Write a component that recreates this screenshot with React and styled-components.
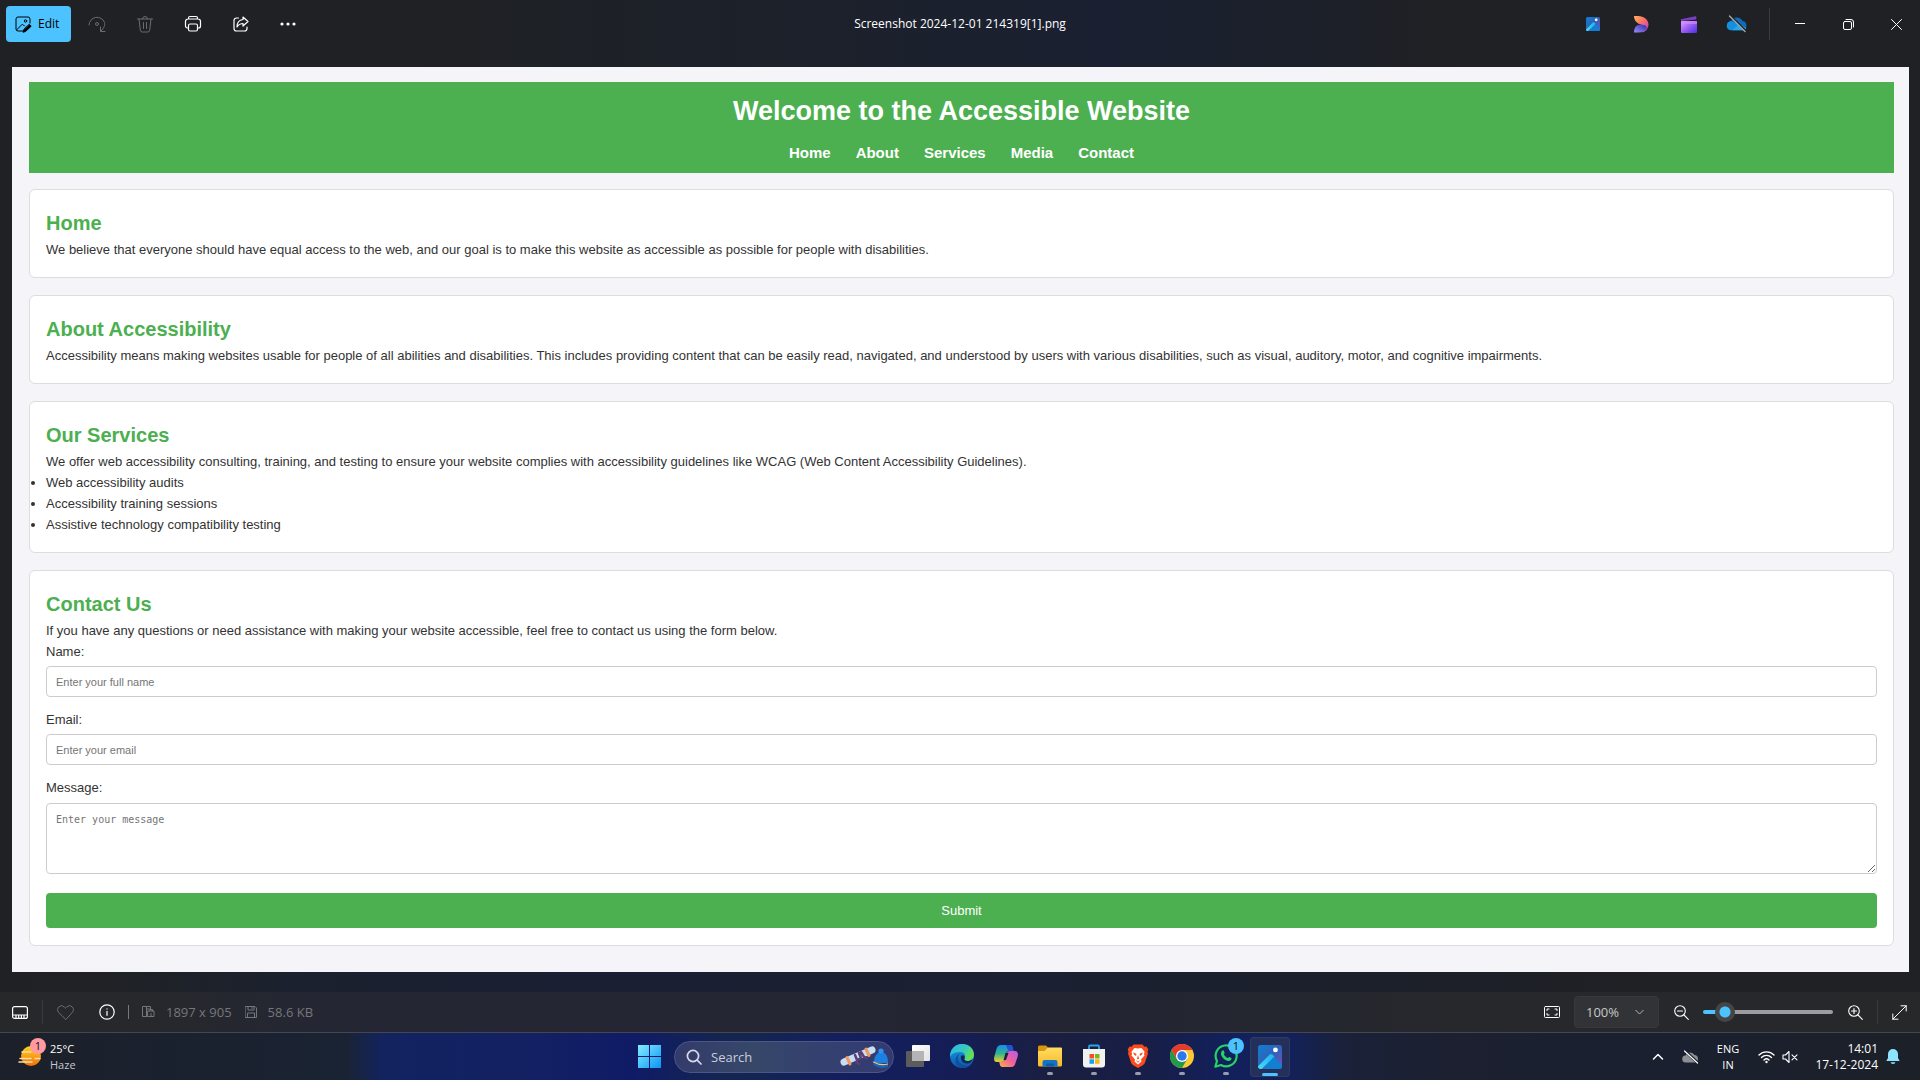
import React from "react";
import styled, { createGlobalStyle, css } from "styled-components";

const siteFont = '"Liberation Sans", Arial, sans-serif';
const shellFont = '"Segoe UI", "Open Sans", "Noto Sans", sans-serif';
const green = "#4caf50";
const accent = "#4cc2ff";

const GlobalStyle = createGlobalStyle`
  *, *::before, *::after { box-sizing: border-box; }
  body { margin: 0; background: #202124; }
  h1, h2, p, ul { margin: 0; padding: 0; }
  button, input, select, textarea { font: inherit; color: inherit; margin: 0; }
`;

/* ---------- window ---------- */

const Desktop = styled.div`
  display: flex;
  flex-direction: column;
  min-height: 100vh;
  font-family: ${shellFont};
  color: #fff;
  background:
    linear-gradient(90deg, #202124 0%, #1f2124 22%, #1c212b 42%, #1a2031 58%, #1c202a 68%, #202124 76%, #202124 100%)
      top / 100% 50% no-repeat,
    linear-gradient(90deg, #202124 0%, #202225 5%, #1b212e 15%, #1a1f33 30%, #1b2032 55%, #1c202a 72%, #202124 88%, #202124 100%)
      bottom / 100% 50% no-repeat;
`;

const TitleBar = styled.header`
  display: grid;
  grid-template-columns: 1fr auto 1fr;
  align-items: center;
  height: 48px;
`;

const Group = styled.div`
  display: flex;
  align-items: center;
  height: 100%;
  justify-content: ${(p) => (p.$end ? "flex-end" : "flex-start")};
`;

const Tray = styled(Group)`
  padding-right: 12px;
`;

const FileName = styled.div`
  font-size: 12px;
  line-height: 16px;
`;

const EditButton = styled.button`
  display: flex;
  align-items: center;
  gap: 6px;
  width: 65px;
  height: 36px;
  margin: 0 2px 0 6px;
  padding: 0 0 0 9px;
  border: 0;
  border-radius: 4px;
  background: ${accent};
  color: #000;
  font-size: 12px;
  line-height: 16px;
`;

const IconButton = styled.button`
  display: flex;
  align-items: center;
  justify-content: ${(p) => (p.$end ? "flex-end" : "center")};
  flex: none;
  width: ${(p) => p.$width || 48}px;
  height: 40px;
  padding: 0;
  border: 0;
  background: none;
  color: ${(p) => (p.$dim ? "#6b6c6f" : "#fff")};
`;

const Divider = styled.span`
  flex: none;
  width: 1px;
  height: ${(p) => p.$height}px;
  margin: ${(p) => p.$margin || "0"};
  background: ${(p) => (p.$bright ? "#77787b" : "#3a3b3f")};
`;

const Viewer = styled.main`
  flex: 1;
  padding: 19px 11px 20px 12px;
`;

/* ---------- web page ---------- */

const Page = styled.article`
  padding: 15px 15px 26px 17px;
  background: #f4f4f9;
  color: #333;
  font-family: ${siteFont};
  font-size: 13px;
  line-height: 21px;
`;

const Banner = styled.header`
  display: flex;
  flex-direction: column;
  align-items: center;
  gap: 8px;
  padding: 8px;
  background: ${green};
  color: #fff;
`;

const BannerTitle = styled.h1`
  font-size: 27px;
  line-height: 43px;
`;

const Nav = styled.nav`
  display: flex;
  gap: 25px;
`;

const NavLink = styled.a`
  color: #fff;
  font-size: 15px;
  font-weight: bold;
  line-height: 24px;
  text-decoration: none;
`;

const Sections = styled.div`
  display: flex;
  flex-direction: column;
  gap: 17px;
  margin-top: 16px;
`;

const Card = styled.section`
  padding: 17px 16px;
  border: 1px solid #ddd;
  border-radius: 6px;
  background: #fff;
`;

const CardTitle = styled.h2`
  color: ${green};
  font-size: 20px;
  line-height: 32px;
`;

const BulletList = styled.ul`
  list-style: disc outside;
`;

const Form = styled.form`
  display: flex;
  flex-direction: column;
`;

const fieldStyle = css`
  display: block;
  width: 100%;
  margin: 4px 0 12px;
  padding: 8px 9px;
  border: 1px solid #ccc;
  border-radius: 4px;
  background: #fff;
  &::placeholder { color: #757575; opacity: 1; }
`;

const Field = styled.input`
  ${fieldStyle}
  height: 31px;
  font-size: 11px;
`;

const MessageField = styled.textarea`
  ${fieldStyle}
  height: 71px;
  margin: 5px 0 19px;
  padding-top: 9px;
  font-family: Consolas, "DejaVu Sans Mono", monospace;
  font-size: 10px;
  line-height: 13px;
`;

const SubmitButton = styled.button`
  height: 35px;
  border: 0;
  border-radius: 4px;
  background: ${green};
  color: #fff;
`;

/* ---------- viewer status bar ---------- */

const StatusBar = styled.footer`
  display: flex;
  justify-content: space-between;
  height: 40px;
  background: linear-gradient(90deg, #27282a 0%, #27282b 7%, #242733 16%, #232632 60%, #26282c 76%, #27282a 100%);
`;

const Detail = styled.span`
  display: flex;
  align-items: center;
  gap: 11px;
  margin-left: 13px;
  color: #75767c;
  font-size: 13px;
  line-height: 18px;
`;

const ZoomBox = styled.div`
  position: relative;
  width: 85px;
  height: 32px;
`;

const ZoomSelect = styled.select`
  width: 100%;
  height: 100%;
  padding: 0 0 0 11px;
  border: 1px solid #37383b;
  border-radius: 4px;
  background: #323336;
  color: #c8c9ca;
  font-size: 13px;
  appearance: none;
`;

const ZoomArrow = styled.svg`
  position: absolute;
  top: 12px;
  right: 15px;
  pointer-events: none;
`;

const Slider = styled.input`
  width: 130px;
  height: 20px;
  background: none;
  appearance: none;
  &::-webkit-slider-runnable-track {
    height: 4px;
    border-radius: 2px;
    background: linear-gradient(90deg, ${accent} 17%, #9d9d9f 17%);
  }
  &::-webkit-slider-thumb {
    appearance: none;
    width: 20px;
    height: 20px;
    margin-top: -8px;
    border-radius: 50%;
    background: radial-gradient(circle, ${accent} 5px, #454545 6px);
  }
`;

/* ---------- taskbar ---------- */

const Taskbar = styled.footer`
  display: grid;
  grid-template-columns: 1fr auto 1fr;
  height: 48px;
  border-top: 1px solid #45464f;
  background: linear-gradient(
    90deg,
    #1c202a 0%, #1a2230 12%, #1a2333 18%, #122360 20%, #132063 28%, #101b66 33%,
    #14264f 38%, #131f5e 44%, #151d55 50%, #1a1f3f 55%, #171e48 60%, #12205c 64%,
    #12215c 67%, #1a2138 70%, #1c2030 76%, #1a2030 86%, #1c2028 100%
  );
`;

const Weather = styled.button`
  position: relative;
  display: flex;
  align-items: center;
  gap: 8px;
  height: 47px;
  padding: 0 0 0 18px;
  border: 0;
  background: none;
  text-align: left;
`;

const TwoLines = styled.span`
  display: block;
  font-size: ${(p) => (p.$large ? 12 : 11)}px;
  line-height: 16px;
  text-align: ${(p) => p.$align || "left"};
`;

const Line = styled.span`
  display: block;
  color: ${(p) => (p.$soft ? "#c5c7cb" : "#fff")};
`;

const Badge = styled.span`
  position: absolute;
  top: ${(p) => p.$top}px;
  left: ${(p) => p.$left}px;
  width: 16px;
  height: 16px;
  border-radius: 50%;
  background: ${(p) => p.$color};
  color: #111;
  font-size: 11px;
  line-height: 16px;
  text-align: center;
`;

const TaskButton = styled.button`
  position: relative;
  display: flex;
  flex-direction: column;
  align-items: center;
  gap: 4px;
  flex: none;
  width: 44px;
  height: 47px;
  padding: 11px 0 0;
  border: 0;
  background: none;
`;

const ActiveTask = styled(TaskButton)`
  width: 40px;
  height: 40px;
  margin: 0 2px;
  padding: 8px 0 0;
  border-radius: 4px;
  background: #24305a;
  box-shadow: inset 0 0 0 1px #303b62;
`;

const Indicator = styled.span`
  width: ${(p) => (p.$active ? 16 : 6)}px;
  height: 3px;
  border-radius: 2px;
  background: ${(p) => (p.$active ? accent : "#9a9cae")};
`;

const SearchBox = styled.label`
  display: flex;
  align-items: center;
  width: 220px;
  height: 32px;
  margin: 0 2px;
  padding: 0 5px 0 11px;
  border: 1px solid #4c5585;
  border-radius: 16px;
  background: linear-gradient(90deg, #343b6b, #364768 35%, #34416f 65%, #333a72);
`;

const SearchInput = styled.input`
  flex: 1;
  min-width: 0;
  margin-left: 9px;
  padding: 0;
  border: 0;
  background: none;
  font-size: 13px;
  &::placeholder { color: #c9cddc; opacity: 1; }
`;

/* ---------- icons ---------- */

const Svg = ({ size = 16, w, h, box, children, ...rest }) => (
  <svg
    width={w || size}
    height={h || size}
    viewBox={box || `0 0 ${w || size} ${h || size}`}
    fill="none"
    stroke="currentColor"
    strokeLinecap="round"
    strokeLinejoin="round"
    aria-hidden="true"
    {...rest}
  >
    {children}
  </svg>
);

const EditIcon = () => (
  <Svg size={17}>
    <path d="M8 15H3a2 2 0 0 1-2-2V3a2 2 0 0 1 2-2h10a2 2 0 0 1 2 2v4M1.500 14 6.500 9q1-1 2 0l1 1" />
    <circle cx="10.500" cy="5" r="1.200" />
    <path d="M14.500 8.500 16.200 10.200 10.500 15.500 8 16.200 8.800 13.700Z" fill="currentColor" />
  </Svg>
);

const RotateIcon = () => (
  <Svg size={18}>
    <path d="M1 10A8 8 0 0 1 16.500 7.500c.7 2.500-.4 5.500-3.500 8.500M17 16.500h-4.500V12" />
    <circle cx="9" cy="9" r="1.500" />
  </Svg>
);

const TrashIcon = () => (
  <Svg size={18}>
    <path d="M1.500 4h15M6.500 4a2.500 2.500 0 0 1 5 0M3 4l1.300 11.200a2 2 0 0 0 2 1.800h5.400a2 2 0 0 0 2-1.800L15 4M7.500 7.500v6M10.500 7.500v6" />
  </Svg>
);

const PrintIcon = () => (
  <Svg size={18} strokeWidth="1.200">
    <path d="M4.500 13H3.500a2 2 0 0 1-2-2V6.500a2.500 2.500 0 0 1 2.500-2.500h10a2.500 2.500 0 0 1 2.500 2.500V11a2 2 0 0 1-2 2h-1M4.500 4V3a1.500 1.500 0 0 1 1.500-1.500h6A1.500 1.500 0 0 1 13.500 3v1" />
    <rect x="4.500" y="9" width="9" height="7" rx="1.500" />
  </Svg>
);

const ShareIcon = () => (
  <Svg size={18} strokeWidth="1.200">
    <path d="M6.500 3H4.500a2.500 2.500 0 0 0-2.500 2.500v8A2.500 2.500 0 0 0 4.500 16h8a2.500 2.500 0 0 0 2.500-2.500V12" />
    <path d="M11 2l5 4.500-5 4.500V8.500C8.500 8.500 6.700 9.500 5 12c0-4 2-7 6-7.500Z" />
  </Svg>
);

const MoreIcon = () => (
  <Svg w={18} h={4} stroke="none" fill="currentColor">
    <circle cx="2" cy="2" r="1.600" />
    <circle cx="8" cy="2" r="1.600" />
    <circle cx="14" cy="2" r="1.600" />
  </Svg>
);

const PhotosLogo = ({ size = 22, id }) => (
  <Svg size={size} box="0 0 22 22" stroke="none">
    <defs>
      <linearGradient id={id} x1="0" y1="0" x2="1" y2="1">
        <stop offset="0" stopColor="#0f7fd6" />
        <stop offset=".5" stopColor="#2f62b8" />
        <stop offset="1" stopColor="#7a50b8" />
      </linearGradient>
      <linearGradient id={`${id}b`} x1="0" y1="1" x2="1" y2="0">
        <stop offset="0" stopColor="#46dbf7" />
        <stop offset="1" stopColor="#1fb2ee" />
      </linearGradient>
    </defs>
    <rect width="22" height="22" rx="2.500" fill={`url(#${id})`} />
    <path d="M12 8.500 22 18v1.500a2.500 2.500 0 0 1-2.500 2.500h-14Z" fill="#1180d2" />
    <path d="M0 19.500 10.500 9q1.500-1.300 3 0L15 10.500 3.500 22H2.500A2.500 2.500 0 0 1 0 19.500Z" fill={`url(#${id}b)`} />
    <circle cx="16" cy="4.500" r="2.200" fill="#fff" />
  </Svg>
);

const DesignerLogo = () => (
  <Svg w={16} h={18} stroke="none">
    <defs>
      <linearGradient id="des1" x1="0" y1="0" x2="1" y2="1">
        <stop offset="0" stopColor="#ffb35a" />
        <stop offset=".5" stopColor="#fb6a6a" />
        <stop offset="1" stopColor="#b03ae0" />
      </linearGradient>
      <linearGradient id="des2" x1="0" y1="1" x2="1" y2="0">
        <stop offset="0" stopColor="#9a8cff" />
        <stop offset="1" stopColor="#2f2ba8" />
      </linearGradient>
    </defs>
    <path d="M1 1h4c6 0 10.500 4 10.500 8.500 0 3.500-2.500 7-6 8L8 9.500C4 8.500 1 5.500 1 1Z" fill="url(#des1)" />
    <path d="M1 17.500C1 12 4 9 8.500 9.500c3.500.3 5.500 1.500 5.500 3.500-1.500 3-4.500 4.500-8.500 4.500Z" fill="url(#des2)" />
  </Svg>
);

const ClipchampLogo = () => (
  <Svg w={16} h={17} stroke="none">
    <defs>
      <linearGradient id="clip1" x1="0" y1="0" x2="1" y2="1">
        <stop offset="0" stopColor="#e7a3ff" />
        <stop offset=".5" stopColor="#9a5cf5" />
        <stop offset="1" stopColor="#4a2fe0" />
      </linearGradient>
    </defs>
    <path d="M0 3.200 14.500.2q.8-.2.800.8V3.500L0 5Z" fill="#7a3fc0" />
    <rect y="5" width="16" height="12" rx="1" fill="url(#clip1)" />
    <path d="M0 5h16v3H0Z" fill="#d08cff" opacity=".6" />
  </Svg>
);

const OneDriveOff = () => (
  <Svg w={22} h={18} stroke="none">
    <path d="M5.500 15A4.700 4.700 0 0 1 5 5.800 6.500 6.500 0 0 1 16.500 6 4.600 4.600 0 0 1 17 15Z" fill="#0f6cbd" />
    <path d="M4.500 15.200A4.500 4.500 0 0 1 4.700 6.300l10 3.200 5.500 3.700a4 4 0 0 1-3.500 2Z" fill="#1490df" />
    <path d="M6 15.200 13 9.500l7.300 3.700a4 4 0 0 1-3.500 2Z" fill="#28a8ea" />
    <path d="M5 1.500 20.500 16.500" stroke="#202124" strokeWidth="2" />
    <path d="M3.500 1 19 16.500" stroke="#a5a5a7" strokeWidth="1.400" />
  </Svg>
);

const MinimizeIcon = () => <Svg w={10} h={10}><path d="M0 4.500h10" /></Svg>;
const RestoreIcon = () => (
  <Svg size={11} strokeWidth="1">
    <rect x=".5" y="2.500" width="8" height="8" rx="1.500" />
    <path d="M3 .5h5a2.500 2.500 0 0 1 2.500 2.500v5" />
  </Svg>
);
const CloseIcon = () => <Svg size={11}><path d="M.5.500l10 10M10.500.500l-10 10" /></Svg>;

const FilmstripIcon = () => (
  <Svg w={16} h={13} strokeWidth="1.200">
    <rect x=".6" y=".6" width="14.800" height="11.800" rx="2" />
    <path d="M1 9h14M4 9v3M6.700 9v3M9.400 9v3M12 9v3" />
  </Svg>
);
const HeartIcon = () => (
  <Svg w={17} h={15}>
    <path d="M8.500 14.300 1.700 7.500a3.900 3.900 0 0 1 5.500-5.600l1.300 1.300 1.300-1.300a3.900 3.900 0 0 1 5.500 5.600Z" />
  </Svg>
);
const InfoIcon = () => (
  <Svg size={16} strokeWidth="1.200">
    <circle cx="8" cy="8" r="7.200" />
    <path d="M8 7.300v4M8 4.800v.1" />
  </Svg>
);
const DimensionsIcon = () => (
  <Svg w={13} h={12}>
    <path d="M4.500 10.500h-4v-10h8v2M4.500.500v10M4.500 3h4" />
    <rect x="6" y="5" width="6" height="5.500" />
    <path d="M8 5V3.500h2.500V5M9 7.500v3" />
  </Svg>
);
const DiskIcon = () => (
  <Svg w={12} h={12}>
    <path d="M.5.500h9.500l1.500 1.500v9.500H.5ZM3 .500v3.500h6V.500M2.500 11.500V7h7v4.500M7 1.500v1" />
  </Svg>
);
const FitIcon = () => (
  <Svg w={16} h={12}>
    <rect x=".5" y=".5" width="15" height="11" rx="1" />
    <path d="M3 4.500V3h2M11 3h2v1.500M13 7.500V9h-2M5 9H3V7.500" />
  </Svg>
);
const ZoomIcon = ({ plus }) => (
  <Svg size={15} strokeWidth="1.100">
    <circle cx="6" cy="6" r="5.300" />
    <path d={plus ? "M10 10l4.300 4.300M3.500 6h5M6 3.500v5" : "M10 10l4.300 4.300M3.500 6h5"} />
  </Svg>
);
const ExpandIcon = () => (
  <Svg size={15}>
    <path d="M.8 14.200 14.200.800M9 .8h5.200V6M.8 9v5.200H6" />
  </Svg>
);

const HazeIcon = () => (
  <Svg w={24} h={24} stroke="none">
    <defs>
      <linearGradient id="haze" x1="0" y1="0" x2="0" y2="1">
        <stop offset="0" stopColor="#ffd21f" />
        <stop offset="1" stopColor="#f2700c" />
      </linearGradient>
    </defs>
    <circle cx="13" cy="11" r="10" fill="url(#haze)" />
    <path d="M4 7h9M2 13.500h11M17 13.500h5M1 17h13" stroke="#f6dfae" strokeWidth="1.500" />
  </Svg>
);

const WindowsLogo = () => (
  <Svg size={24} stroke="none">
    <defs>
      <linearGradient id="win" x1="0" y1="0" x2="1" y2="1">
        <stop offset="0" stopColor="#85ecff" />
        <stop offset="1" stopColor="#0a94f5" />
      </linearGradient>
    </defs>
    <path d="M0 1h11v11H0ZM12 1h11v11H12ZM0 13h11v11H0ZM12 13h11v11H12Z" fill="url(#win)" />
  </Svg>
);
const SearchGlyph = () => (
  <Svg size={16} strokeWidth="1.700" color="#d7d9e8">
    <circle cx="7" cy="7" r="5.600" />
    <path d="M11.200 11.200 15 15" />
  </Svg>
);
const WinterArt = () => (
  <Svg w={48} h={24} stroke="none">
    <path d="M4 17 32 5" stroke="#c7def5" strokeWidth="7" />
    <path d="M7 12.500l3 6.500M26 4l3 6.500" stroke="#ee9a5c" strokeWidth="3" />
    <path d="M15 10l2 5 4-2-2-5M21 7l3 5M16 17l3 2M24 12l3 1" stroke="#5b3f73" strokeWidth="2.500" />
    <path d="M34 18c0-7 3-11 7.500-11S48 12 48 18Z" fill="#1d7fe0" />
    <circle cx="41" cy="6" r="2.600" fill="#2a95ee" />
    <path d="M33.500 16.500q7 5 14.500 2v3.500q-8 3-14.500-2Z" fill="#1762b8" />
    <path d="M33.500 17q7 4 14.500 2" stroke="#f0c56a" strokeWidth="1.200" />
  </Svg>
);
const TaskViewIcon = () => (
  <Svg size={24} stroke="none">
    <defs>
      <linearGradient id="tv" x1="0" y1="0" x2="1" y2="1">
        <stop offset="0" stopColor="#fff" />
        <stop offset="1" stopColor="#e2e2e2" />
      </linearGradient>
    </defs>
    <rect y="7" width="18" height="16" rx="1" fill="#5c5c5c" />
    <rect x="6" y="1" width="18" height="16" rx="1" fill="url(#tv)" />
    <rect x="6" y="7" width="12" height="10" fill="#b4b4b4" />
  </Svg>
);
const EdgeLogo = () => (
  <Svg size={24} stroke="none">
    <defs>
      <linearGradient id="ed1" x1="0" y1="0" x2="1" y2=".5">
        <stop offset="0" stopColor="#2bb5ea" />
        <stop offset=".6" stopColor="#35c9c0" />
        <stop offset="1" stopColor="#66e04f" />
      </linearGradient>
      <linearGradient id="ed2" x1="0" y1="0" x2="0" y2="1">
        <stop offset="0" stopColor="#1ba0e6" />
        <stop offset="1" stopColor="#0b57ac" />
      </linearGradient>
    </defs>
    <circle cx="12" cy="12" r="12" fill="url(#ed2)" />
    <path d="M.3 10C1.300 4 6 0 12 0c7 0 12 4.800 12 10.500 0 4-3 6.500-6.500 6.500-3 0-4-1.300-3-2.700 1.500-2.500.3-6.300-4-6.300C6 8 1.500 9 .3 13Z" fill="url(#ed1)" />
    <path d="M8 13c-.5 5 3.500 8.500 8.500 8.500 2 0 3.500-.5 5-1.500A12 12 0 0 1 12 24C8 23.500 5 20 5.500 15.500 6 12 8 10 10 9.500 8.500 10.500 8.200 11.700 8 13Z" fill="#124f9c" />
    <path d="M14.800 14c-1 1.700 0 3 2.700 3 2 0 3.500-.5 5-2-.5 2.500-2 4.200-4.500 4.500-5 .5-8-3.500-7-7.500 1-1.500 4-1 3.800 2Z" fill="#15255e" />
  </Svg>
);
const CopilotLogo = () => (
  <Svg size={24} stroke="none">
    <defs>
      <linearGradient id="co1" x1="0" y1="0" x2="0" y2="1">
        <stop offset="0" stopColor="#1b8cf0" />
        <stop offset=".5" stopColor="#2fb58c" />
        <stop offset="1" stopColor="#f0d030" />
      </linearGradient>
      <linearGradient id="co2" x1="0" y1="1" x2="1" y2="0">
        <stop offset="0" stopColor="#ffae4a" />
        <stop offset=".5" stopColor="#f0609a" />
        <stop offset="1" stopColor="#b55cf0" />
      </linearGradient>
    </defs>
    <path d="M7 1h9c2 0 2.500 1.500 3 4l.5 2H15c-2 0-2.500 1-3 3l-1.500 5c-.5 2-1.500 3-3.500 3H3c-3 0-3.500-3-2.500-6l2-7C3.500 2 4.500 1 7 1Z" fill="url(#co1)" />
    <path d="M12 1h4c2 0 2.500 1.500 3 4l.5 2H15c-1.500-1-2-4-3-6Z" fill="#2152d8" />
    <path d="M17 23H8.500c-2 0-2.500-1.500-3-4L5 17.500h3c2 0 2.500-1 3-3L12.500 10c.5-2 1.500-3 3.500-3h5c3 0 3.500 3 2.500 6l-2 6c-1 3-2 4-4.500 4Z" fill="url(#co2)" />
    <path d="M11.500 9h3L12 16H9.500Z" fill="#1a2048" />
  </Svg>
);
const FolderIcon = () => (
  <Svg size={24} stroke="none">
    <defs>
      <linearGradient id="fo" x1="0" y1="0" x2="0" y2="1">
        <stop offset="0" stopColor="#ffdd62" />
        <stop offset="1" stopColor="#f7b92a" />
      </linearGradient>
    </defs>
    <path d="M0 3a1.500 1.500 0 0 1 1.500-1.500H8L10.500 4 8 7H0Z" fill="#d9960f" />
    <path d="M0 7h6.500L10 3.500h13a1 1 0 0 1 1 1V21a1.500 1.500 0 0 1-1.500 1.500h-21A1.500 1.500 0 0 1 0 21Z" fill="url(#fo)" />
    <path d="M4.500 22.500V18a2 2 0 0 1 2-2h11a2 2 0 0 1 2 2v4.500Z" fill="#1573c4" />
    <path d="M8 22.500v-2q0-1 1-1h6q1 0 1 1v2Z" fill="#0d5aa5" />
  </Svg>
);
const StoreIcon = () => (
  <Svg size={24} stroke="none">
    <path d="M7 6V2.500A1 1 0 0 1 8 1.500h8a1 1 0 0 1 1 1V6" stroke="#2aa3e8" strokeWidth="1.800" />
    <path d="M1 5h22v15.500a3 3 0 0 1-3 3H4a3 3 0 0 1-3-3Z" fill="#f1f1f1" />
    <path d="M7.500 10H12v4.500H7.500Z" fill="#f04e24" />
    <path d="M13 10h4.500v4.500H13Z" fill="#7cb518" />
    <path d="M7.500 15.300H12v4.500H7.500Z" fill="#13a3ec" />
    <path d="M13 15.300h4.500v4.500H13Z" fill="#fbb70c" />
  </Svg>
);
const BraveLogo = () => (
  <Svg size={24} stroke="none">
    <path d="M7.500.500h9l2 2.200 2-.200 1.800 3-.8 2 .5 2L19 18.500c-.5 1.500-1.500 2.300-3 3.300l-4 2.200-4-2.200c-1.500-1-2.500-1.800-3-3.300L2 9.500l.5-2-.8-2 1.800-3 2 .200Z" fill="#fb4a1c" />
    <path d="M12 4.500 15.500 4l3 3.700-.5 2.500.5 1.300-3.500 4 .5 2L12 20.500 8.500 17.500l.5-2-3.500-4L6 10.200l-.5-2.500L8.500 4Z" fill="#fff" />
    <path d="M7 8.500l3.500 1.200L10 12l-2-1.500ZM17 8.500l-3.500 1.200.5 2.300 2-1.500ZM12 11l1 3.500-1 1-1-1ZM9.500 16l2.500 1.500 2.500-1.500-2.500 2.800Z" fill="#fb4a1c" />
  </Svg>
);
const ChromeLogo = () => (
  <Svg size={24} stroke="none">
    <circle cx="12" cy="12" r="12" fill="#fcc934" />
    <path d="M1.600 6A12 12 0 0 0 12 24l5.200-9L12 12 6.800 15Z" fill="#229a4c" />
    <path d="M1.600 6A12 12 0 0 1 22.400 6H12L6.800 15Z" fill="#e33b2e" />
    <circle cx="12" cy="12" r="6" fill="#fff" />
    <circle cx="12" cy="12" r="4.700" fill="#2a78ee" />
  </Svg>
);
const WhatsAppLogo = () => (
  <Svg size={24} stroke="#25d366" strokeWidth="2.200">
    <path d="M1.300 22.700 3 17A10.500 10.500 0 1 1 7 21Z" />
    <path d="M8.300 6.500c.8-.6 1.300-.2 1.600.5l.7 1.700c.2.600-.9 1.300-.7 1.900.8 1.500 2 2.700 3.600 3.400.6.200 1.200-1.200 1.800-1l1.900.9c.5.300.5.700.3 1.200-.5 1.500-2 2.100-3.500 1.800-3.700-.9-6.600-4-7-7 0-1.300.5-2.800 1.300-3.400Z" fill="#25d366" stroke="none" />
  </Svg>
);

const ChevronUp = () => <Svg w={12} h={8} strokeWidth="1.500"><path d="M1.500 6 6 1.500 10.500 6" /></Svg>;
const CloudOff = () => (
  <Svg w={17} h={14} stroke="none">
    <path d="M4 12.500a3.500 3.500 0 0 1-.5-7A5 5 0 0 1 12.500 5 3.800 3.800 0 0 1 13 12.500Z" fill="#8d8f94" />
    <path d="M3 1l13 12" stroke="#1b202b" strokeWidth="3" />
    <path d="M2.500 1l13 12" stroke="#fff" strokeWidth="1.200" />
  </Svg>
);
const WifiIcon = () => (
  <Svg w={17} h={14} strokeWidth="1.400">
    <path d="M1 5a10.500 10.500 0 0 1 15 0M3.500 7.500a7 7 0 0 1 10 0M6 10a3.600 3.600 0 0 1 5 0" />
    <circle cx="8.500" cy="12" r="1.200" fill="currentColor" stroke="none" />
  </Svg>
);
const MuteIcon = () => (
  <Svg w={16} h={14} strokeWidth="1.100">
    <path d="M1 5v4h2.500L7 12.500V1.500L3.500 5ZM10 4.800l5 5M15 4.800l-5 5" />
  </Svg>
);
const BellIcon = () => (
  <Svg w={14} h={17} stroke="none" fill="#8fe3ff">
    <path d="M7 1a5 5 0 0 1 5 5v4l1.700 3H.3L2 10V6a5 5 0 0 1 5-5Z" />
    <path d="M4.700 14.200h4.600a2.300 1.800 0 0 1-4.600 0Z" />
  </Svg>
);

/* ---------- data ---------- */

const navItems = ["Home", "About", "Services", "Media", "Contact"];
const services = [
  "Web accessibility audits",
  "Accessibility training sessions",
  "Assistive technology compatibility testing",
];
const runningApps = [
  { name: "File Explorer", Icon: FolderIcon },
  { name: "Microsoft Store", Icon: StoreIcon },
  { name: "Brave", Icon: BraveLogo },
  { name: "Chrome", Icon: ChromeLogo },
  { name: "WhatsApp", Icon: WhatsAppLogo, badge: "1" },
];

const WebPage = () => (
  <Page>
    <Banner>
      <BannerTitle>Welcome to the Accessible Website</BannerTitle>
      <Nav>
        {navItems.map((item) => (
          <NavLink key={item} href={`#${item.toLowerCase()}`}>{item}</NavLink>
        ))}
      </Nav>
    </Banner>
    <Sections>
      <Card id="home">
        <CardTitle>Home</CardTitle>
        <p>
          We believe that everyone should have equal access to the web, and our goal is to make this
          website as accessible as possible for people with disabilities.
        </p>
      </Card>
      <Card id="about">
        <CardTitle>About Accessibility</CardTitle>
        <p>
          Accessibility means making websites usable for people of all abilities and disabilities. This
          includes providing content that can be easily read, navigated, and understood by users with
          various disabilities, such as visual, auditory, motor, and cognitive impairments.
        </p>
      </Card>
      <Card id="services">
        <CardTitle>Our Services</CardTitle>
        <p>
          We offer web accessibility consulting, training, and testing to ensure your website complies
          with accessibility guidelines like WCAG (Web Content Accessibility Guidelines).
        </p>
        <BulletList>
          {services.map((s) => <li key={s}>{s}</li>)}
        </BulletList>
      </Card>
      <Card id="contact">
        <CardTitle>Contact Us</CardTitle>
        <p>
          If you have any questions or need assistance with making your website accessible, feel free to
          contact us using the form below.
        </p>
        <Form onSubmit={(e) => e.preventDefault()}>
          <label htmlFor="name">Name:</label>
          <Field id="name" type="text" placeholder="Enter your full name" />
          <label htmlFor="email">Email:</label>
          <Field id="email" type="email" placeholder="Enter your email" />
          <label htmlFor="message">Message:</label>
          <MessageField id="message" placeholder="Enter your message" />
          <SubmitButton type="submit">Submit</SubmitButton>
        </Form>
      </Card>
    </Sections>
  </Page>
);

export default function App() {
  return (
    <>
      <GlobalStyle />
      <Desktop>
        <TitleBar>
          <Group>
            <EditButton><EditIcon />Edit</EditButton>
            <IconButton $dim aria-label="Rotate"><RotateIcon /></IconButton>
            <IconButton $dim aria-label="Delete"><TrashIcon /></IconButton>
            <IconButton aria-label="Print"><PrintIcon /></IconButton>
            <IconButton aria-label="Share"><ShareIcon /></IconButton>
            <IconButton aria-label="See more"><MoreIcon /></IconButton>
          </Group>
          <FileName>Screenshot 2024-12-01 214319[1].png</FileName>
          <Group $end>
            <IconButton aria-label="Photos"><PhotosLogo size={14} id="ph1" /></IconButton>
            <IconButton aria-label="Designer"><DesignerLogo /></IconButton>
            <IconButton aria-label="Clipchamp"><ClipchampLogo /></IconButton>
            <IconButton aria-label="OneDrive"><OneDriveOff /></IconButton>
            <Divider $height={32} $margin="0 6px 0 8px" />
            <IconButton aria-label="Minimize"><MinimizeIcon /></IconButton>
            <IconButton aria-label="Restore"><RestoreIcon /></IconButton>
            <IconButton aria-label="Close"><CloseIcon /></IconButton>
          </Group>
        </TitleBar>

        <Viewer><WebPage /></Viewer>

        <StatusBar>
          <Group>
            <IconButton $width={40} aria-label="Filmstrip"><FilmstripIcon /></IconButton>
            <Divider $height={24} $margin="0 2px" />
            <IconButton $width={40} $dim aria-label="Favourite"><HeartIcon /></IconButton>
            <IconButton $width={43} aria-label="File info"><InfoIcon /></IconButton>
            <Divider $bright $height={14} />
            <Detail><DimensionsIcon />1897 x 905</Detail>
            <Detail><DiskIcon />58.6 KB</Detail>
          </Group>
          <Group $end>
            <IconButton $width={44} aria-label="Zoom to fit"><FitIcon /></IconButton>
            <ZoomBox>
              <ZoomSelect aria-label="Zoom level" defaultValue="100">
                <option value="100">100%</option>
              </ZoomSelect>
              <ZoomArrow width="9" height="8" viewBox="0 0 9 8" fill="none" stroke="#b5b6b8" aria-hidden="true">
                <path d="M.5 2l4 4 4-4" />
              </ZoomArrow>
            </ZoomBox>
            <IconButton $width={44} aria-label="Zoom out"><ZoomIcon /></IconButton>
            <Slider type="range" min="0" max="100" defaultValue="11" aria-label="Zoom" />
            <IconButton $width={44} aria-label="Zoom in"><ZoomIcon plus /></IconButton>
            <Divider $height={24} />
            <IconButton $width={42} aria-label="Full screen"><ExpandIcon /></IconButton>
          </Group>
        </StatusBar>

        <Taskbar>
          <Group>
            <Weather>
              <HazeIcon />
              <Badge $top={5} $left={30} $color="#ff9aa2">1</Badge>
              <TwoLines>
                <Line>25°C</Line>
                <Line $soft>Haze</Line>
              </TwoLines>
            </Weather>
          </Group>
          <Group>
            <TaskButton aria-label="Start"><WindowsLogo /></TaskButton>
            <SearchBox>
              <SearchGlyph />
              <SearchInput type="text" placeholder="Search" aria-label="Search" />
              <WinterArt />
            </SearchBox>
            <TaskButton aria-label="Task view"><TaskViewIcon /></TaskButton>
            <TaskButton aria-label="Edge"><EdgeLogo /></TaskButton>
            <TaskButton aria-label="Copilot"><CopilotLogo /></TaskButton>
            {runningApps.map(({ name, Icon, badge }) => (
              <TaskButton key={name} aria-label={name}>
                <Icon />
                <Indicator />
                {badge && <Badge $top={5} $left={24} $color={accent}>{badge}</Badge>}
              </TaskButton>
            ))}
            <ActiveTask aria-label="Photos">
              <PhotosLogo size={24} id="ph2" />
              <Indicator $active />
            </ActiveTask>
          </Group>
          <Tray $end>
            <IconButton $width={32} aria-label="Hidden icons"><ChevronUp /></IconButton>
            <IconButton $width={32} aria-label="OneDrive status"><CloudOff /></IconButton>
            <IconButton $width={44} aria-label="Language">
              <TwoLines $align="center"><Line>ENG</Line><Line>IN</Line></TwoLines>
            </IconButton>
            <IconButton $width={32} aria-label="Network"><WifiIcon /></IconButton>
            <IconButton $width={16} aria-label="Volume"><MuteIcon /></IconButton>
            <IconButton $width={80} $end aria-label="Clock">
              <TwoLines $large $align="right"><Line>14:01</Line><Line>17-12-2024</Line></TwoLines>
            </IconButton>
            <IconButton $width={30} aria-label="Notifications"><BellIcon /></IconButton>
          </Tray>
        </Taskbar>
      </Desktop>
    </>
  );
}
